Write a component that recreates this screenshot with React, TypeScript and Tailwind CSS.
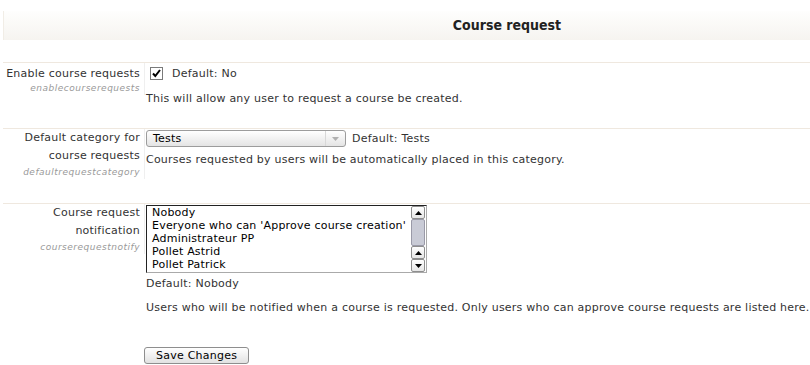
import React from "react";

function Checkbox() {
  return (
    <div className="w-[13px] h-[13px] border border-[#7a7a7a] bg-white flex items-center justify-center">
      <svg width="11" height="11" viewBox="0 0 11 11">
        <path d="M2 5.5 L4.3 8 L9 2" stroke="#000" strokeWidth="2" fill="none" />
      </svg>
    </div>
  );
}

function Arrow({ dir }: { dir: "up" | "down" }) {
  return (
    <div className="h-[13px] w-[14px] border border-[#8e8e8e] rounded-[2px] bg-gradient-to-b from-white to-[#e6e6e6] flex items-center justify-center">
      <svg width="7" height="4" viewBox="0 0 7 4">
        {dir === "up" ? <path d="M0 4 L3.5 0 L7 4 Z" fill="#000" /> : <path d="M0 0 L3.5 4 L7 0 Z" fill="#000" />}
      </svg>
    </div>
  );
}

export default function App() {
  const users = [
    "Nobody",
    "Everyone who can 'Approve course creation'",
    "Administrateur PP",
    "Pollet Astrid",
    "Pollet Patrick",
  ];
  return (
    <div className="w-[810px] h-[365px] bg-white overflow-hidden text-[11px] tracking-[0.23px] text-[#333] font-['DejaVu_Sans',sans-serif]">
      <div className="mt-[11px] ml-[3px] h-[29px] border-l border-[#f1ede6] bg-gradient-to-b from-[#fefefd] to-[#f6f4f0] pl-[200px] flex items-center justify-center">
        <span className="font-['DejaVu_Sans_Condensed',sans-serif] font-bold text-[14px] tracking-normal text-[#222]">Course request</span>
      </div>

      <div className="mt-[22px] ml-[3px] border-t border-[#efe8df] flex pb-[22px]">
        <div className="w-[142px] shrink-0 self-start border-r border-[#efefef] pr-[4px] pt-[4px] text-right">
          <div className="leading-[14px]">Enable course requests</div>
          <div className="leading-[14px] italic text-[9px] tracking-[0.5px] text-[#999]">enablecourserequests</div>
        </div>
        <div className="pl-[1px] pt-[4px]">
          <div className="flex items-center h-[13px] pl-[4px]">
            <Checkbox />
            <span className="ml-[9px] leading-[14px]">Default: No</span>
          </div>
          <div className="mt-[12px] leading-[14px]">This will allow any user to request a course be created.</div>
        </div>
      </div>

      <div className="ml-[3px] border-t border-[#efe8df] flex pb-[24px]">
        <div className="w-[142px] shrink-0 self-start border-r border-[#efefef] pr-[4px] text-right">
          <div className="leading-[18px]">Default category for course requests</div>
          <div className="leading-[14px] italic text-[9px] tracking-[0.5px] text-[#999]">defaultrequestcategory</div>
        </div>
        <div className="pl-[1px] pt-[1px]">
          <div className="flex items-center">
            <div className="w-[200px] h-[17px] border border-[#9c9c9c] rounded-[3px] bg-gradient-to-b from-white to-[#e4e4e4] flex items-center">
              <span className="flex-1 pl-[6px] text-black leading-[14px]">Tests</span>
              <div className="w-[20px] h-full border-l border-[#d8d8d8] flex items-center justify-center">
                <svg width="7" height="4" viewBox="0 0 7 4"><path d="M0 0 L3.5 4 L7 0 Z" fill="#b0b0b0" /></svg>
              </div>
            </div>
            <span className="ml-[6px] leading-[14px]">Default: Tests</span>
          </div>
          <div className="mt-[6px] leading-[14px]">Courses requested by users will be automatically placed in this category.</div>
        </div>
      </div>

      <div className="ml-[3px] border-t border-[#efe8df] flex">
        <div className="w-[142px] shrink-0 self-start border-r border-[#efefef] pr-[4px] text-right">
          <div className="leading-[18px]">Course request notification</div>
          <div className="leading-[14px] italic text-[9px] tracking-[0.5px] text-[#999]">courserequestnotify</div>
        </div>
        <div className="pl-[1px] pt-[1px]">
          <div className="w-[281px] h-[68px] border border-t-[#222] border-l-[#222] border-r-[#aaa] border-b-[#aaa] bg-white flex">
            <div className="flex-1 pl-[5px]">
              {users.map((u) => (
                <div key={u} className="leading-[13px] text-[11px] tracking-[0.21px] text-black whitespace-nowrap">{u}</div>
              ))}
            </div>
            <div className="w-[15px] flex flex-col pr-[1px]">
              <Arrow dir="up" />
              <div className="flex-1 w-[14px] border border-[#9a9aa8] rounded-[2px] bg-[#c9cbd6]" />
              <Arrow dir="up" />
              <Arrow dir="down" />
            </div>
          </div>
          <div className="mt-[4px] leading-[14px]">Default: Nobody</div>
          <div className="mt-[10px] leading-[14px] whitespace-nowrap">Users who will be notified when a course is requested. Only users who can approve course requests are listed here.</div>
          <button className="mt-[32px] -ml-[2px] h-[17px] px-[11px] border border-[#8e8e8e] rounded-[3px] bg-gradient-to-b from-white to-[#e2e2e2] text-[11px] tracking-[0.23px] leading-[14px] text-black font-['DejaVu_Sans',sans-serif]">
            Save Changes
          </button>
        </div>
      </div>
    </div>
  );
}
